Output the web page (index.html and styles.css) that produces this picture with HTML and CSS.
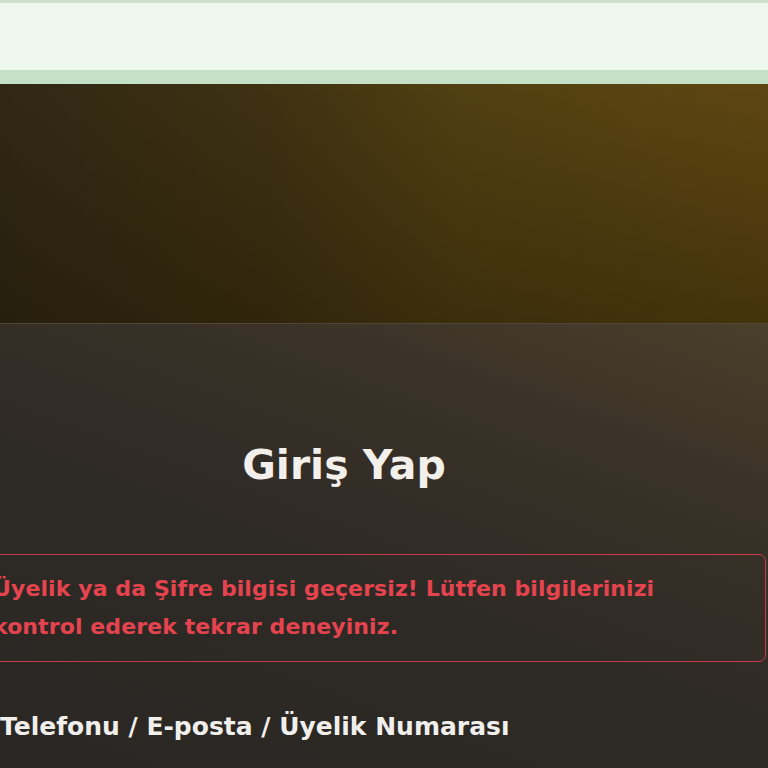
FILE: index.html
```html
<!DOCTYPE html>
<html lang="tr">
<head>
<meta charset="utf-8" />
<title>Giriş Yap</title>
<link rel="stylesheet" href="styles.css">
</head>
<body>
<div class="topbar"></div>
<div class="hero"></div>
<div class="panel">
    <div class="login">
        <h1 class="login-title">Giriş Yap</h1>
        <div class="alert">Üyelik ya da Şifre bilgisi geçersiz! Lütfen bilgilerinizi<br />kontrol ederek tekrar deneyiniz.</div>
        <div class="field">
            <label class="field-label">Telefonu / E-posta / Üyelik Numarası</label>
        </div>
    </div>
</div>
</body>
</html>
```
FILE: styles.css
```css
html{font-family: "DejaVu Sans", "Open Sans", sans-serif;}
body{margin:0;background:#2a2622;overflow:hidden;}

/*====================Top Part=====================*/
.topbar{height:67px;background:#eff8ee;border-top:3px solid #cfdfcc;border-bottom:14px solid #c4e0c6;}
.hero{height:239px;background:linear-gradient(180deg,rgba(0,0,0,0) 0%,rgba(20,14,0,0.35) 100%),linear-gradient(90deg,#302815 0%,#3f3212 35%,#514012 60%,#5e4612 100%);}

/*====================Login Part=====================*/
.panel{border-top:1px solid #4f4737;height:444px;background:linear-gradient(200deg,#4a3f2a 0%,#3a3228 25%,#2e2a25 55%,#2a2724 100%);}
.login{margin-left:-78px;width:844px;padding-top:116px;}
.login-title{margin:0;text-align:center;font-size:41px;font-weight:700;color:#f3f0ec;line-height:50px;}
.alert{margin-top:64px;border:1px solid #c93b46;border-radius:7px;padding:15px 20px 15px 70px;color:#e5444f;font-size:22px;font-weight:700;line-height:38px;letter-spacing:0.1px;}
.field{margin-top:50px;padding-left:78px;}
.field-label{color:#f1efec;font-size:25px;font-weight:700;}
/*====================Login Part End=====================*/
```
